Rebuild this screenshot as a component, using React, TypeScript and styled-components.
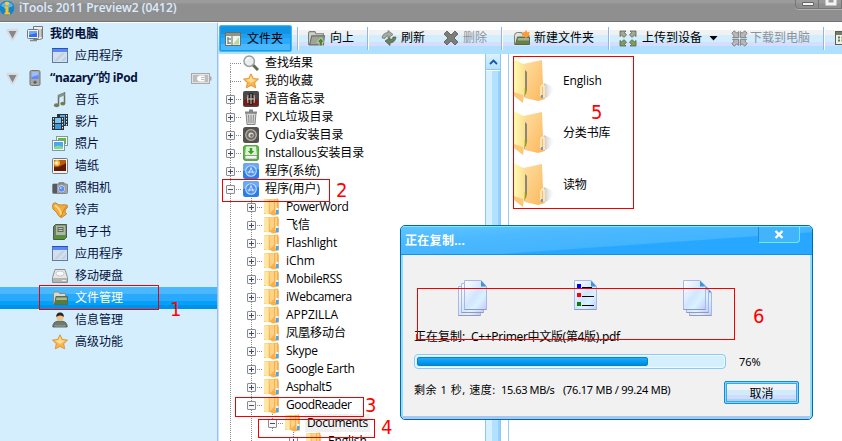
import React from 'react';
import styled, { createGlobalStyle, css } from 'styled-components';

const Global = createGlobalStyle`
  * { box-sizing: border-box; }
  html, body { margin: 0; padding: 0; overflow: hidden; background: #fff; }
  body { font: 12px/18px "Open Sans", "Noto Sans CJK SC", sans-serif; color: #000; }
  svg { display: block; flex: none; }
`;

/* ---------- window ---------- */

const Window = styled.div`
  position: relative;
  width: 842px;
  height: 441px;
  overflow: hidden;
  display: flex;
  flex-direction: column;
  background: #fff;
`;

const TitleBar = styled.header`
  flex: none;
  height: 23px;
  display: flex;
  align-items: flex-start;
  background: linear-gradient(#9c9c9c 0, #9a9a9a 3px, #8f8f8f 4px, #8f8f8f 21px, #747474 21px, #747474 22px, #fff 22px);
`;

const WindowTitle = styled.h1`
  margin: -1px 0 0 4px;
  flex: 1;
  font-size: 12px;
  line-height: 17px;
  font-weight: 600;
  color: #dcecff;
  letter-spacing: -0.04px;
`;

const WindowButtons = styled.div`
  display: flex;
  width: 47px;
  height: 9px;
  border: 1px solid #777;
  border-width: 0 0 1px 1px;
  border-radius: 0 0 0 4px;
  box-shadow: 0 1px 0 #b2b2b2;
`;

const WindowButton = styled.span`
  width: 26px;
  padding-left: 6px;
  border-right: 1px solid #777;
`;

const Body = styled.div`
  flex: 1;
  min-height: 0;
  display: flex;
`;

/* ---------- sidebar ---------- */

const Sidebar = styled.nav`
  flex: none;
  width: 218px;
  height: 418px;
  background: #d4eefd;
  border-right: 1px solid #9dbdf0;
`;

const SideRow = styled.div<{ $root?: boolean; $active?: boolean }>`
  height: 22px;
  display: flex;
  align-items: center;
  padding-left: ${p => (p.$root ? 6 : 52)}px;
  color: ${p => (p.$active ? '#fff' : '#06123c')};
  font-weight: ${p => (p.$root ? 700 : 400)};
  ${p => p.$active && css`
    background: linear-gradient(#4ab8ff 0 7px, #28a9fb 7px 14px, #00a0fb 14px 18px, #0090e6 18px);
  `}
`;

const SideLabel = styled.span<{ $track?: number }>`
  margin-left: 7px;
  flex: 1;
  white-space: nowrap;
  letter-spacing: ${p => p.$track ?? 0}px;
`;

const Twisty = styled.span`
  width: 13px;
  margin-right: 8px;
`;

const BatterySlot = styled.span`
  margin-right: 5px;
`;

/* ---------- toolbar ---------- */

const Main = styled.div`
  flex: 1;
  min-width: 0;
  display: flex;
  flex-direction: column;
`;

const Toolbar = styled.div`
  flex: none;
  height: 31px;
  display: flex;
  align-items: center;
  background: linear-gradient(#fff 0 7px, #f1f1f3 7px 12px, #d2eefd 12px 19px, #d5deff 19px 23px, #b0e0ff 23px);
`;

const Tool = styled.div<{ $w: number; $pad: number; $gap?: number; $disabled?: boolean; $on?: boolean }>`
  flex: none;
  width: ${p => p.$w}px;
  height: 27px;
  margin: 0 0 1px;
  padding-left: ${p => p.$pad}px;
  display: flex;
  align-items: center;
  gap: ${p => p.$gap ?? 5}px;
  white-space: nowrap;
  color: ${p => (p.$disabled ? '#8d929c' : '#000')};
  ${p => p.$on && css`
    margin: 0 5px 0 1px;
    border: 1px solid #3fb9f3;
    border-radius: 2px;
    box-shadow: inset 0 0 0 1px #1a9be8;
    background: linear-gradient(#1194e3 0 8px, #229fed 8px 12px, #27aaff 12px 18px, #4ab8ff 18px);
  `}
`;

const Divider = styled.i`
  flex: none;
  width: 1px;
  height: 23px;
  background: #90b4f2;
  box-shadow: 1px 0 0 #fff;
`;

/* ---------- panes ---------- */

const Panes = styled.div`
  flex: 1;
  min-height: 0;
  display: flex;
`;

const Tree = styled.div`
  width: 267px;
  overflow: hidden;
  border-left: 1px solid #c5e6fb;
  padding-left: 1px;
`;

const TreeRow = styled.div`
  height: 18px;
  display: flex;
  align-items: center;
`;

const Guide = styled.span<{ $first?: boolean; $branch?: boolean; $blank?: boolean }>`
  flex: none;
  width: 21px;
  height: 18px;
  display: flex;
  align-items: center;
  justify-content: center;
  ${p => !p.$blank && css`
    background:
      repeating-linear-gradient(#8a8a8a 0 1px, transparent 1px 2px) 10px ${p.$first ? '9px' : '0'} / 1px 18px no-repeat
      ${p.$branch ? ', repeating-linear-gradient(90deg, #8a8a8a 0 1px, transparent 1px 2px) 10px 9px / 11px 1px no-repeat' : ''};
  `}
`;

const Expander = styled.span<{ $open?: boolean }>`
  width: 9px;
  height: 9px;
  border: 1px solid #8c8c8c;
  border-radius: 1px;
  background:
    linear-gradient(#3c4f73, #3c4f73) 1px 3px / 5px 1px no-repeat,
    linear-gradient(#3c4f73, #3c4f73) 3px 1px / 1px ${p => (p.$open ? 0 : 5)}px no-repeat,
    #f7f7f7;
`;

const TreeIcon = styled.span`
  margin-left: 2px;
  width: 16px;
  height: 18px;
  display: flex;
  align-items: center;
`;

const TreeLabel = styled.span<{ $selected?: boolean; $track?: number }>`
  margin-left: 4px;
  padding: 0 2px;
  line-height: 18px;
  white-space: nowrap;
  letter-spacing: ${p => p.$track ?? 0}px;
  background: ${p => (p.$selected ? '#f0f0f0' : 'transparent')};
`;

const Scrollbar = styled.div`
  flex: none;
  width: 16px;
  display: flex;
  flex-direction: column;
  border: 1px solid #8cc8f5;
  border-width: 0 1px;
  background: linear-gradient(90deg, #d6f0ff 0 6px, #b1e1ff 6px 12px, #93d3fb 12px);
`;

const ScrollUp = styled.div`
  height: 16px;
  display: flex;
  align-items: center;
  justify-content: center;
  background: linear-gradient(#d9f2ff, #b4e2ff);
  border: 1px solid #8cc8f5;
  border-width: 0 0 1px;
  box-shadow: 0 1px 0 #fff;
`;

const Files = styled.div`
  flex: 1;
  margin-left: 7px;
  padding: 1px 0 0 5px;
  border-left: 1px solid #9cccf5;
`;

const FileItem = styled.div`
  height: 52px;
  display: flex;
  align-items: center;
  gap: 5px;
`;

const FileLabel = styled.span`
  letter-spacing: -0.15px;
`;

/* ---------- copy dialog ---------- */

const Dialog = styled.section`
  position: absolute;
  left: 400px;
  top: 225px;
  width: 413px;
  height: 195px;
  display: flex;
  flex-direction: column;
  border: 1px solid #0069a6;
  border-radius: 5px;
  overflow: hidden;
  background: #8cdffc;
  font-family: "Noto Sans", "Noto Sans CJK SC", sans-serif;
`;

const DialogTitle = styled.header`
  height: 29px;
  flex: none;
  display: flex;
  justify-content: space-between;
  align-items: flex-start;
  padding: 0 12px 0 4px;
  color: #fff;
  font-weight: 700;
  background: linear-gradient(176deg, #5fc4ff 0, #4cb9ff 28%, #43b4ff 60%, #27a7ff 62%);
  border-top: 1px solid #7eeaff;
  border-bottom: 1px solid #0e95e8;
`;

const DialogName = styled.span`
  line-height: 28px;
  letter-spacing: 0.3px;
`;

const CloseButton = styled.span`
  width: 42px;
  height: 16px;
  display: flex;
  align-items: center;
  justify-content: center;
  border: 1px solid #5ff0fb;
  border-top: 0;
  border-left-color: #1c8dd2;
  border-radius: 0 0 4px 0;
  background: #43b3fb;
`;

const DialogBody = styled.div`
  flex: 1;
  margin: 0 2px;
  padding: 25px 11px 0;
  border-bottom: 3px solid #a6c8f0;
  background: #f1f1f1;
`;

const DocRow = styled.div`
  height: 38px;
  display: flex;
  justify-content: space-between;
  padding: 0 87px 0 44px;
`;

const CopyLine = styled.p`
  margin: 10px 0 0;
  height: 18px;
  display: flex;
  white-space: pre;
`;

const CopyKey = styled.span<{ $w: number; $track?: number }>`
  flex: none;
  width: ${p => p.$w}px;
  letter-spacing: ${p => p.$track ?? 0}px;
`;

const ProgressRow = styled.div`
  margin-top: 8px;
  height: 15px;
  display: flex;
  align-items: center;
  gap: 13px;
  font-size: 11px;
`;

const Track = styled.div`
  width: 312px;
  height: 15px;
  padding: 2px;
  border: 1px solid #85ccf8;
  border-radius: 4px;
  background: #d5effd;
  box-shadow: inset 0 0 0 1px #eefaff;
`;

const Fill = styled.div`
  height: 9px;
  border-radius: 2px;
  border: 1px solid #0b83cc;
  background: linear-gradient(#26a9f5, #009bf2 60%, #0087dc);
`;

const FootRow = styled.div`
  margin-top: 12px;
  height: 23px;
  display: flex;
  align-items: flex-start;
  font-size: 11px;
  white-space: nowrap;
`;

const Cancel = styled.button`
  flex: none;
  width: 75px;
  height: 23px;
  padding: 0;
  font: 12px/18px "Noto Sans CJK SC", sans-serif;
  color: #000;
  border: 1px solid #0c8ddd;
  border-radius: 2px;
  box-shadow: inset 0 0 0 1px #8bd6ff, inset 0 0 0 2px #39a8ec;
  background: linear-gradient(#f2f3f6 0 8px, #d0ebfb 8px 13px, #d1dcfd 13px 17px, #a8d3f6 17px);
`;

/* ---------- red call-outs over the window ---------- */

const Callout = styled.div<{ $x: number; $y: number; $w: number; $h: number }>`
  position: absolute;
  left: ${p => p.$x}px;
  top: ${p => p.$y}px;
  width: ${p => p.$w}px;
  height: ${p => p.$h}px;
  border: 1px solid #f20000;
`;

const Mark = styled.span<{ $x: number; $y: number }>`
  position: absolute;
  left: ${p => p.$x}px;
  top: ${p => p.$y}px;
  font: 20px/20px "DejaVu Sans Condensed", "DejaVu Sans", sans-serif;
  font-stretch: condensed;
  color: #f00;
`;

/* ---------- icons ---------- */

const I = ({ children, s = 16 }: { children: React.ReactNode; s?: number }) => (
  <svg width={s} height={s} viewBox="0 0 16 16">{children}</svg>
);

const StarShape = 'M8 .8l2.300 4.600 5.200.7-3.800 3.600 1 5.200L8 12.400 3.300 14.900l1-5.200L.5 6.100l5.200-.7z';

const icons = {
  pc: (
    <I>
      <path d="M6.500.5h9v12l-3 1h-6z" fill="#ececec" stroke="#777" />
      <path d="M13 3v8M14.500 3v8" stroke="#888" strokeWidth=".7" />
      <rect x=".5" y="3.500" width="11" height="9" rx="1" fill="#f4f4f4" stroke="#777" />
      <rect x="2" y="5" width="8" height="6" fill="#2f6fe8" />
      <path d="M2 5h8v2L2 9z" fill="#6ea5fa" />
      <path d="M3 14.500h7" stroke="#888" strokeWidth="1.500" />
    </I>
  ),
  app: (
    <I>
      <rect x=".5" y=".5" width="15" height="14" fill="#d3dfec" stroke="#5f7b9e" />
      <rect x="1" y="1" width="14" height="3" fill="#5b88f2" />
      <path d="M0 .5h16" stroke="#274fc4" />
      <path d="M2 13L10 5h3l-8 8zM9 13l5-5v3l-2 2z" fill="#b9c9da" opacity=".7" />
    </I>
  ),
  ipod: (
    <I>
      <rect x="3" y=".5" width="10" height="15" rx="1.500" fill="#a9a9a9" stroke="#757575" />
      <rect x="4.500" y="2" width="7" height="7" fill="#5d8df5" />
      <path d="M4.500 2h7v3l-7 2z" fill="#9cbcff" />
      <path d="M8 10.500v3.500M6.200 12.200h3.600" stroke="#4c4c4c" />
    </I>
  ),
  music: (
    <I>
      <path d="M6.500 13V3.500l6-2.500v10.500" fill="none" stroke="#68706a" strokeWidth="1.500" />
      <path d="M6.500 4.500l6-2.500" stroke="#8b948c" strokeWidth="2.500" />
      <ellipse cx="4.600" cy="13.200" rx="2.700" ry="2" fill="#767b52" />
      <ellipse cx="10.800" cy="11.600" rx="2.500" ry="1.900" fill="#767b52" />
    </I>
  ),
  film: (
    <I>
      <rect x="5" y="0" width="11" height="12" fill="#2b3238" />
      <rect x="8" y="1" width="5" height="10" fill="#58aee4" />
      <rect x="0" y="3" width="12" height="13" fill="#2b3238" />
      <rect x="3" y="4" width="6" height="5" fill="#7ac6f2" />
      <rect x="3" y="10" width="6" height="5" fill="#3e9bd8" />
      <path d="M1.500 4v12M10.500 4v12M14.500 1v11" stroke="#e8eef2" strokeDasharray="1.500 1.500" />
    </I>
  ),
  photo: (
    <I>
      <rect x="4.500" y=".5" width="11" height="9" fill="#fff" stroke="#8a9a8a" />
      <rect x="6" y="2" width="8" height="6" fill="#56c03a" />
      <rect x=".5" y="4.500" width="12" height="10" fill="#fff" stroke="#8296a6" />
      <rect x="2" y="6" width="9" height="7" fill="#4aa6f0" />
      <path d="M2 11q4-3 9 0v2H2z" fill="#7edb8e" />
    </I>
  ),
  wallpaper: (
    <I>
      <rect x=".5" y=".5" width="15" height="15" rx="1" fill="#f2f2f2" stroke="#777" />
      <rect x="2" y="2" width="12" height="11" fill="#b65c08" />
      <path d="M2 13V9q5 1 12-4v8z" fill="#5e1a04" />
      <circle cx="5" cy="5" r="3" fill="#f6bc45" /><circle cx="4.500" cy="5" r="1.500" fill="#fff6d0" />
    </I>
  ),
  camera: (
    <I>
      <path d="M6 4l1-2h5l1 2z" fill="#8b8f94" />
      <rect x=".5" y="4" width="15" height="9.500" rx="1" fill="#a3a5a8" stroke="#777" strokeWidth=".8" />
      <rect x="1" y="4" width="4" height="9" fill="#57595c" />
      <circle cx="9.500" cy="8.800" r="4" fill="#e3e8f0" stroke="#777" strokeWidth=".6" />
      <circle cx="9.500" cy="8.800" r="2.900" fill="#5a8ef0" /><circle cx="8.800" cy="8" r="1" fill="#b7d2ff" />
    </I>
  ),
  bell: (
    <I>
      <path d="M.5 3.500Q1 .5 3.500.8q3 2.700 6 2.200 3-.8 5.700.2l.3 2q-2.700 2.300-2.500 4.800l1.500 2-4.500 3.300q-2 .5-3.300-1.500Q5 10 1 7z" fill="#f5aa3a" stroke="#b8741b" strokeWidth=".8" />
      <path d="M3 3.500q5 3 6.500 9.500" stroke="#fddc8e" strokeWidth="2" fill="none" />
      <path d="M14.500 4.500q-3 3-5.500 10" stroke="#c98320" fill="none" />
    </I>
  ),
  book: (
    <I>
      <path d="M1.500 2.500l2-2h11v13l-2 2h-11z" fill="#6c7d60" stroke="#4f5848" />
      <rect x="4" y="1.500" width="9.500" height="9.500" fill="#aab8a4" />
      <rect x="5.500" y="3" width="6" height="5" fill="#5c6c55" />
      <path d="M6.500 4.500h4M6.500 6.500h4" stroke="#d9e3d4" strokeWidth=".8" />
      <rect x="3" y="12" width="11" height="3" fill="#4c962a" />
    </I>
  ),
  disk: (
    <I>
      <path d="M3 1.500h10l2.500 8v5H.5v-5z" fill="#e6e6e6" stroke="#8f8f8f" />
      <ellipse cx="8" cy="5.500" rx="4" ry="2.500" fill="#f8f8f8" stroke="#bbb" strokeWidth=".7" />
      <rect x="1" y="10" width="14" height="4" fill="#b5b5b5" /><path d="M10 12.500h4" stroke="#eee" />
    </I>
  ),
  folderGreen: (
    <I>
      <path d="M1.500 13.500v-10l1-1.500h4l1 1.500h6v10z" fill="#d9dacf" stroke="#8a8f7d" />
      <path d="M4 6.500h11.500v8H2.500z" fill="#577d3e" stroke="#5c6a52" />
      <path d="M4.500 7.500h10.300v2.500H4z" fill="#a9b79b" />
    </I>
  ),
  person: (
    <I>
      <path d="M.8 15q0-5.200 5-5.800h4.400q5 .6 5 5.800z" fill="#6f7b6f" stroke="#4a504a" strokeWidth=".8" />
      <path d="M2.500 14h11" stroke="#9aa69a" />
      <circle cx="8" cy="5.400" r="3.500" fill="#eec28d" />
      <path d="M4.200 5Q4 .6 8 .5t3.800 4.500Q10 3.200 8 3.500T4.200 5z" fill="#2b2420" />
    </I>
  ),
  star: (
    <I>
      <path d={StarShape} fill="#fbb64b" stroke="#d98a26" strokeWidth=".8" />
      <path d="M8 2.500l1.600 3.800 3.400.5L8 10 3 6.800l3.400-.5z" fill="#ffdb94" />
    </I>
  ),
  panel: (
    <I>
      <rect x=".5" y="1.500" width="15" height="13" fill="#edf6ea" stroke="#65706a" />
      <rect x="1" y="2" width="14" height="3" fill="#8c948f" />
      <path d="M7 5v9" stroke="#65706a" />
      <path d="M3 6v7M3 8h3M3 12h3" stroke="#55605a" />
      <path d="M8 13.500L14 6v7.500z" fill="#b8d7a4" />
    </I>
  ),
  up: (
    <I s={17}>
      <path d="M.5 13.500v-11l1-1h5l1 2h7v10z" fill="#cfd1c9" stroke="#7c8078" />
      <path d="M3.500 5.500h12l-1 8.500H1.500z" fill="#9da597" stroke="#6a6f66" />
      <path d="M12 7.500l3.500 4h-2v3.500h-3v-3.500h-2z" fill="#4f7f35" stroke="#e4ebdd" strokeWidth=".6" />
    </I>
  ),
  refresh: (
    <I>
      <path d="M1 8q.5-5 6-5.500V.5l5 4-5 3.500V5.800Q4.500 6 4 8.500z" fill="#a5aaa2" stroke="#6b7068" strokeWidth=".7" />
      <path d="M15 7q-.5 5.500-6 6v2.500l-5-4.500 5-3.500v2.300q2.500 0 3-2.800z" fill="#6b8259" stroke="#4f5c48" strokeWidth=".7" />
    </I>
  ),
  remove: (
    <I>
      <path d="M1 4l3-3 4 4 4-4 3 3-4 4 4 4-3 3-4-4-4 4-3-3 4-4z" fill="#7b7d7b" stroke="#565856" strokeWidth=".8" />
    </I>
  ),
  newFolder: (
    <I>
      <path d="M.5 14.500v-9q0-3 3-3h4l1 2h6v10z" fill="#dfe2da" stroke="#7a8075" />
      <path d="M3.500 7h12v7.500h-14z" fill="#618445" stroke="#596651" />
      <path d="M4 8h11v2.500H3.500z" fill="#a2af93" />
      <path d="M12 0l1.300 2.200 2.500-.5-1 2.300 1.200 2-2.500.2L12 8.500l-1.400-2.100-2.500-.1 1-2.100-1-2.300 2.500.4z" fill="#ff9a34" />
    </I>
  ),
  expand: (
    <svg width="18" height="17" viewBox="0 0 18 17">
      <g fill="#a2aa97" stroke="#59614f" strokeWidth=".8">
        <path d="M1 1h6L5.500 2.500 7.500 5 5 7.300 2.500 5.200 1 6.500z" />
        <path d="M17 1h-6l1.500 1.500L10.500 5 13 7.300l2.500-2.100L17 6.500z" />
        <path d="M1 16h6l-1.500-1.500 2-2.500L5 9.700l-2.500 2.100L1 10.500z" fill="#79a05a" />
        <path d="M17 16h-6l1.500-1.500-2-2.500L13 9.700l2.500 2.100 1.500-1.300z" fill="#79a05a" />
      </g>
    </svg>
  ),
  shrink: (
    <I s={17}>
      <g fill="#b8b8b8" stroke="#777" strokeWidth=".8">
        <path d="M7.200 7.200H1.500L3 5.700.8 3 3 .8 5.600 3 7.200 1.500z" />
        <path d="M8.800 7.200h5.700L13 5.700 15.200 3 13 .8 10.400 3 8.800 1.500z" />
        <path d="M7.200 8.800H1.500L3 10.300.8 13 3 15.200 5.600 13l1.600 1.500z" />
        <path d="M8.800 8.800h5.700L13 10.300l2.200 2.700-2.200 2.200-2.600-2.200-1.600 1.500z" />
      </g>
    </I>
  ),
  calendar: (
    <I>
      <rect x=".5" y="1.500" width="15" height="13" fill="#eef2ea" stroke="#59604f" />
      <rect x="1" y="2" width="14" height="3" fill="#737b6b" />
      <path d="M3 7.500h12M3 10.500h12" stroke="#66785a" strokeWidth="2" strokeDasharray="2 1.500" />
    </I>
  ),
  search: (
    <I>
      <path d="M10 10l5 5" stroke="#5d6b52" strokeWidth="3" />
      <circle cx="6.200" cy="6.200" r="5.200" fill="#e9eef1" stroke="#9b9f9f" strokeWidth="1.500" />
      <path d="M3 6q.5-3 3.500-3" stroke="#fff" strokeWidth="1.500" fill="none" />
    </I>
  ),
  voice: (
    <I>
      <rect width="16" height="16" rx="2" fill="#4b4848" />
      <path d="M1 9q7-3 14 0v5.500H1z" fill="#7d1714" />
      <rect x="5.500" y="2" width="5" height="12" rx="2.500" fill="#28221f" />
      <path d="M5 4q-1 4 0 8M11 4q1 4 0 8M8 3v10" stroke="#c9b5a8" strokeWidth="1.100" fill="none" />
      <path d="M5 8h6" stroke="#ddd" />
    </I>
  ),
  trash: (
    <I>
      <path d="M3 4h10l-1 11.500H4z" fill="#d5d5d5" stroke="#858585" />
      <path d="M5.500 6l.5 8M8 6v8M10.500 6l-.5 8" stroke="#8a8a8a" />
      <path d="M2 3.500h12M6 1.500h4" stroke="#858585" strokeWidth="2" />
    </I>
  ),
  cydia: (
    <I>
      <rect width="16" height="16" rx="2.500" fill="#55514d" />
      <circle cx="8" cy="8" r="5.300" fill="#6e6963" stroke="#b5b0aa" strokeWidth="1.300" />
      <circle cx="8" cy="8" r="2.600" fill="#dedad3" /><circle cx="8.500" cy="8.500" r="1.400" fill="#77716c" />
    </I>
  ),
  installous: (
    <I>
      <rect x=".4" y=".4" width="15.200" height="15.200" rx="2.500" fill="#58bf3c" stroke="#3b8f29" strokeWidth=".8" />
      <path d="M3 1.500h10l1 8.500H2z" fill="#dff0d9" />
      <path d="M8 3v4" stroke="#34a51d" strokeWidth="2.500" /><path d="M4.800 6h6.400L8 9.500z" fill="#34a51d" />
      <rect x="2" y="10.500" width="12" height="3.500" fill="#f5f5f5" stroke="#777" strokeWidth=".6" />
    </I>
  ),
  appstore: (
    <I>
      <rect width="16" height="16" rx="2.500" fill="#2a7eea" />
      <path d="M0 8V2.500Q0 0 2.500 0h11Q16 0 16 2.500V6z" fill="#6da8f5" />
      <circle cx="8" cy="8" r="5.300" fill="#4a90f0" stroke="#c4dcfb" strokeWidth="1.100" />
      <path d="M8 4.500L5.800 10.500M8 4.500l2.200 6M4.500 9h7" stroke="#cfe2fb" fill="none" />
    </I>
  ),
  folder: (
    <svg width="16" height="18" viewBox="0 0 16 18">
      <path d="M0 1h9v15H0z" fill="#fbc871" />
      <path d="M0 1l4.500 1v14.500L0 15z" fill="#fee7a6" />
      <path d="M6 1.500l8-1 .8 3v13l-6 1L5 15.500z" fill="#f8b04c" />
      <path d="M6 1.500l4-.5v10l-4 4z" fill="#ffd184" />
      <path d="M12 1.500v13" stroke="#ffdc9c" strokeWidth="1.500" />
      <path d="M12 11h2.500v5H12z" fill="#4aa6e8" /><path d="M12 10h2.500v2H12z" fill="#e9f3fb" />
    </svg>
  ),
};

const Info = () => (
  <svg width="15" height="17" viewBox="0 0 15 17">
    <circle cx="7" cy="8" r="7.300" fill="#0f86cf" />
    <path d="M1 6a6.500 6.500 0 0 1 12 0q-6 3-12 0z" fill="#59b6e9" />
    <circle cx="7" cy="3.500" r="2.100" fill="#ffc935" />
    <path d="M4.500 6.500h4v6h1.500v2H4.500v-2h1V8.500h-1z" fill="#ffc021" />
  </svg>
);

const Arrow = () => (
  <svg width="13" height="13" viewBox="0 0 13 13">
    <path d="M2 2.500h9L6.500 11z" fill="#8a8a8a" stroke="#d9dcdf" strokeWidth="3.500" strokeLinejoin="round" />
    <path d="M2.500 3h8l-4 7.500z" fill="#878787" />
  </svg>
);

const Battery = () => (
  <svg width="21" height="11" viewBox="0 0 21 11">
    <rect x=".5" y=".5" width="18" height="10" fill="#e2e2e2" stroke="#a9a9a9" />
    <rect x="2" y="2" width="15" height="7" fill="#bdbdbd" />
    <path d="M9 2.500h4.500v6H9Q6 8 6 5.500t3-3z" fill="#fff" />
    <path d="M10 4.500h3M10 6.500h3" stroke="#bdbdbd" />
    <path d="M19.500 3.500v4" stroke="#a9a9a9" strokeWidth="2" />
  </svg>
);

const BigFolder = () => (
  <svg width="44" height="48" viewBox="0 0 44 48">
    <defs>
      <linearGradient id="fFront" x1="0" x2="1"><stop offset="0" stopColor="#fffbb0" /><stop offset="1" stopColor="#fbdf92" /></linearGradient>
      <linearGradient id="fBack" x1="0" y1="0" x2="1" y2="1"><stop offset="0" stopColor="#fde0a2" /><stop offset="1" stopColor="#fcb65a" /></linearGradient>
      <linearGradient id="fShade"><stop offset="0" stopColor="#9a9a9a" /><stop offset="1" stopColor="#fff" stopOpacity="0" /></linearGradient>
    </defs>
    <path d="M26 43l4-17 12 5-8 9z" fill="url(#fShade)" />
    <path d="M9 7l19-4 1 24 2 2v13l-7 2-13-3z" fill="url(#fBack)" />
    <path d="M10 12l3 3v18l-3 8z" fill="#8b8778" />
    <path d="M0 2l11 6v27L9 46 0 38z" fill="url(#fFront)" />
    <path d="M0 35l9 3v8l-9-7z" fill="#fdc779" />
    <path d="M11.500 31v6" stroke="#92a20e" strokeWidth="1.500" />
    <path d="M27 39v-9q1-3 3-1v12" fill="none" stroke="#fff1d2" strokeWidth="1.500" />
    <rect x="27" y="38" width="2" height="3" fill="#6d9bd0" />
  </svg>
);

const Sheet = ({ x, y }: { x: number; y: number }) => (
  <g transform={`translate(${x} ${y})`}>
    <path d="M.5.500H17l5.500 6v23H.5z" fill="url(#sheet)" stroke="#a9b6e8" />
    <path d="M.5 29.500h22" stroke="#9598ae" />
    <path d="M17 .5l5.500 6H17z" fill="#3e94dc" />
  </g>
);

const Documents = ({ flip }: { flip?: boolean }) => (
  <svg width="29" height="37" viewBox="0 0 29 37">
    <defs>
      <linearGradient id="sheet" x1="0" y1="0" x2="1" y2="1"><stop offset="0" stopColor="#fff" /><stop offset=".5" stopColor="#d2e5ff" /><stop offset=".7" stopColor="#d9f3ff" /><stop offset="1" stopColor="#c2c8ff" /></linearGradient>
    </defs>
    <Sheet x={flip ? 6 : 0} y={6} />
    <Sheet x={3} y={3} />
    <Sheet x={flip ? 0 : 6} y={0} />
  </svg>
);

const ListDocument = () => (
  <svg width="23" height="30" viewBox="0 0 23 30">
    <Sheet x={0} y={0} />
    <path d="M3 4h4v4H3z" fill="#0000f0" /><path d="M3 13h4v4H3z" fill="#f00" /><path d="M3 22h4v4H3z" fill="#088008" />
    <path d="M8 7.500h10M8 16.500h12M8 25.500h12" stroke="#000" />
  </svg>
);

/* ---------- data ---------- */

type IconName = keyof typeof icons;

const sideItems: { icon: IconName; text: string; root?: boolean; battery?: boolean; track?: number }[] = [
  { icon: 'pc', text: '我的电脑', root: true, track: 0.1 },
  { icon: 'app', text: '应用程序' },
  { icon: 'ipod', text: '“nazary”的 iPod', root: true, battery: true, track: -0.36 },
  { icon: 'music', text: '音乐' },
  { icon: 'film', text: '影片' },
  { icon: 'photo', text: '照片' },
  { icon: 'wallpaper', text: '墙纸' },
  { icon: 'camera', text: '照相机' },
  { icon: 'bell', text: '铃声' },
  { icon: 'book', text: '电子书' },
  { icon: 'app', text: '应用程序' },
  { icon: 'disk', text: '移动硬盘' },
  { icon: 'folderGreen', text: '文件管理' },
  { icon: 'person', text: '信息管理' },
  { icon: 'star', text: '高级功能' },
];
const activeItem = 12;

type Node = { level: number; icon: IconName; text: string; box?: 'open' | 'closed'; selected?: boolean; track?: number };

const apps: [string, number?][] = [
  ['PowerWord', -0.4], ['飞信'], ['Flashlight', -0.22], ['iChm', -0.1], ['MobileRSS', -0.3], ['iWebcamera', -0.42],
  ['APPZILLA', -0.05], ['凤凰移动台'], ['Skype', -0.25], ['Google Earth', -0.33], ['Asphalt5', -0.4],
];

const nodes: Node[] = [
  { level: 1, icon: 'search', text: '查找结果' },
  { level: 1, icon: 'star', text: '我的收藏' },
  { level: 1, icon: 'voice', text: '语音备忘录', box: 'closed' },
  { level: 1, icon: 'trash', text: 'PXL垃圾目录', box: 'closed' },
  { level: 1, icon: 'cydia', text: 'Cydia安装目录', box: 'closed' },
  { level: 1, icon: 'installous', text: 'Installous安装目录', box: 'closed', track: -0.2 },
  { level: 1, icon: 'appstore', text: '程序(系统)', box: 'closed' },
  { level: 1, icon: 'appstore', text: '程序(用户)', box: 'open' },
  ...apps.map(([text, track]): Node => ({ level: 2, icon: 'folder', text, track, box: 'closed' })),
  { level: 2, icon: 'folder', text: 'GoodReader', box: 'open', track: -0.5 },
  { level: 3, icon: 'folder', text: 'Documents', box: 'open', selected: true, track: -0.38 },
  { level: 4, icon: 'folder', text: 'English', box: 'closed', track: -0.15 },
];

const progress = 231;

export default function App() {
  return (
    <>
      <Global />
      <Window>
        <TitleBar>
          <Info />
          <WindowTitle>iTools 2011 Preview2 (0412)</WindowTitle>
          <WindowButtons>
            <WindowButton>
              <svg width="12" height="6" viewBox="0 0 12 6"><path d="M.5 2.500h11v3H.5z" fill="#f4f4f4" stroke="#666" /></svg>
            </WindowButton>
            <WindowButton>
              <svg width="12" height="6" viewBox="0 0 12 6"><path d="M2 0v4h8V0" fill="none" stroke="#f4f4f4" strokeWidth="3" /></svg>
            </WindowButton>
          </WindowButtons>
        </TitleBar>
        <Body>
          <Sidebar>
            {sideItems.map((item, i) => (
              <SideRow key={i} $root={item.root} $active={i === activeItem}>
                {item.root && <Twisty><Arrow /></Twisty>}
                {icons[item.icon]}
                <SideLabel $track={item.track}>{item.text}</SideLabel>
                {item.battery && <BatterySlot><Battery /></BatterySlot>}
              </SideRow>
            ))}
          </Sidebar>
          <Main>
            <Toolbar>
              <Tool $w={73} $pad={5} $gap={6} $on>{icons.panel}文件夹</Tool>
              <Divider />
              <Tool $w={69} $pad={10}>{icons.up}向上</Tool>
              <Divider />
              <Tool $w={71} $pad={13} $gap={4}>{icons.refresh}刷新</Tool>
              <Tool $w={62} $pad={4} $gap={4} $disabled>{icons.remove}删除</Tool>
              <Divider />
              <Tool $w={106} $pad={12} $gap={4}>{icons.newFolder}新建文件夹</Tool>
              <Divider />
              <Tool $w={118} $pad={10} $gap={5}>
                {icons.expand}上传到设备
                <svg width="11" height="5" viewBox="0 0 11 5"><path d="M2.500 0h8l-4 4.500z" fill="#000" /></svg>
              </Tool>
              <Tool $w={96} $pad={4} $gap={2} $disabled>{icons.shrink}下载到电脑</Tool>
              <Divider />
              <Tool $w={18} $pad={11}>{icons.calendar}</Tool>
            </Toolbar>
            <Panes>
              <Tree>
                {nodes.map((n, i) => (
                  <TreeRow key={i}>
                    {Array.from({ length: n.level }, (_, c) => {
                      const own = c === n.level - 1;
                      return (
                        <Guide key={c} $branch={own} $first={i === 0} $blank={!own && c === 2}>
                          {own && n.box && <Expander $open={n.box === 'open'} />}
                        </Guide>
                      );
                    })}
                    <TreeIcon>{icons[n.icon]}</TreeIcon>
                    <TreeLabel $selected={n.selected} $track={n.track}>{n.text}</TreeLabel>
                  </TreeRow>
                ))}
              </Tree>
              <Scrollbar>
                <ScrollUp>
                  <svg width="9" height="6" viewBox="0 0 9 6"><path d="M1 5l3.500-3.500L8 5" fill="none" stroke="#1b56a8" strokeWidth="1.800" /></svg>
                </ScrollUp>
              </Scrollbar>
              <Files>
                {['English', '分类书库', '读物'].map(name => (
                  <FileItem key={name}>
                    <BigFolder />
                    <FileLabel>{name}</FileLabel>
                  </FileItem>
                ))}
              </Files>
            </Panes>
          </Main>
        </Body>

        <Dialog>
          <DialogTitle>
            <DialogName>正在复制...</DialogName>
            <CloseButton>
              <svg width="10" height="9" viewBox="0 0 10 9"><path d="M1.500 1l7 7M8.500 1l-7 7" stroke="#fff" strokeWidth="2.400" /></svg>
            </CloseButton>
          </DialogTitle>
          <DialogBody>
            <DocRow>
              <Documents />
              <ListDocument />
              <Documents flip />
            </DocRow>
            <CopyLine>
              <CopyKey $w={57}>正在复制:</CopyKey>
              <CopyKey $w={160} $track={-0.33}>C++Primer中文版(第4版).pdf</CopyKey>
            </CopyLine>
            <ProgressRow>
              <Track><Fill style={{ width: progress }} /></Track>
              76%
            </ProgressRow>
            <FootRow>
              <CopyKey $w={87} $track={0.55}>剩余 1 秒, 速度:</CopyKey>
              <CopyKey $w={62} $track={-0.4}>15.63 MB/s</CopyKey>
              <CopyKey $w={161} $track={-0.25}>(76.17 MB / 99.24 MB)</CopyKey>
              <Cancel>取消</Cancel>
            </FootRow>
          </DialogBody>
        </Dialog>

        <Callout $x={39} $y={285} $w={120} $h={25} />
        <Callout $x={222} $y={179} $w={108} $h={23} />
        <Callout $x={235} $y={397} $w={129} $h={20} />
        <Callout $x={258} $y={419} $w={117} $h={19} />
        <Callout $x={513} $y={56} $w={121} $h={153} />
        <Callout $x={417} $y={288} $w={318} $h={52} />
        <Mark $x={170} $y={299}>1</Mark>
        <Mark $x={336} $y={180}>2</Mark>
        <Mark $x={365} $y={395}>3</Mark>
        <Mark $x={381} $y={417}>4</Mark>
        <Mark $x={591} $y={102}>5</Mark>
        <Mark $x={753} $y={306}>6</Mark>
      </Window>
    </>
  );
}
